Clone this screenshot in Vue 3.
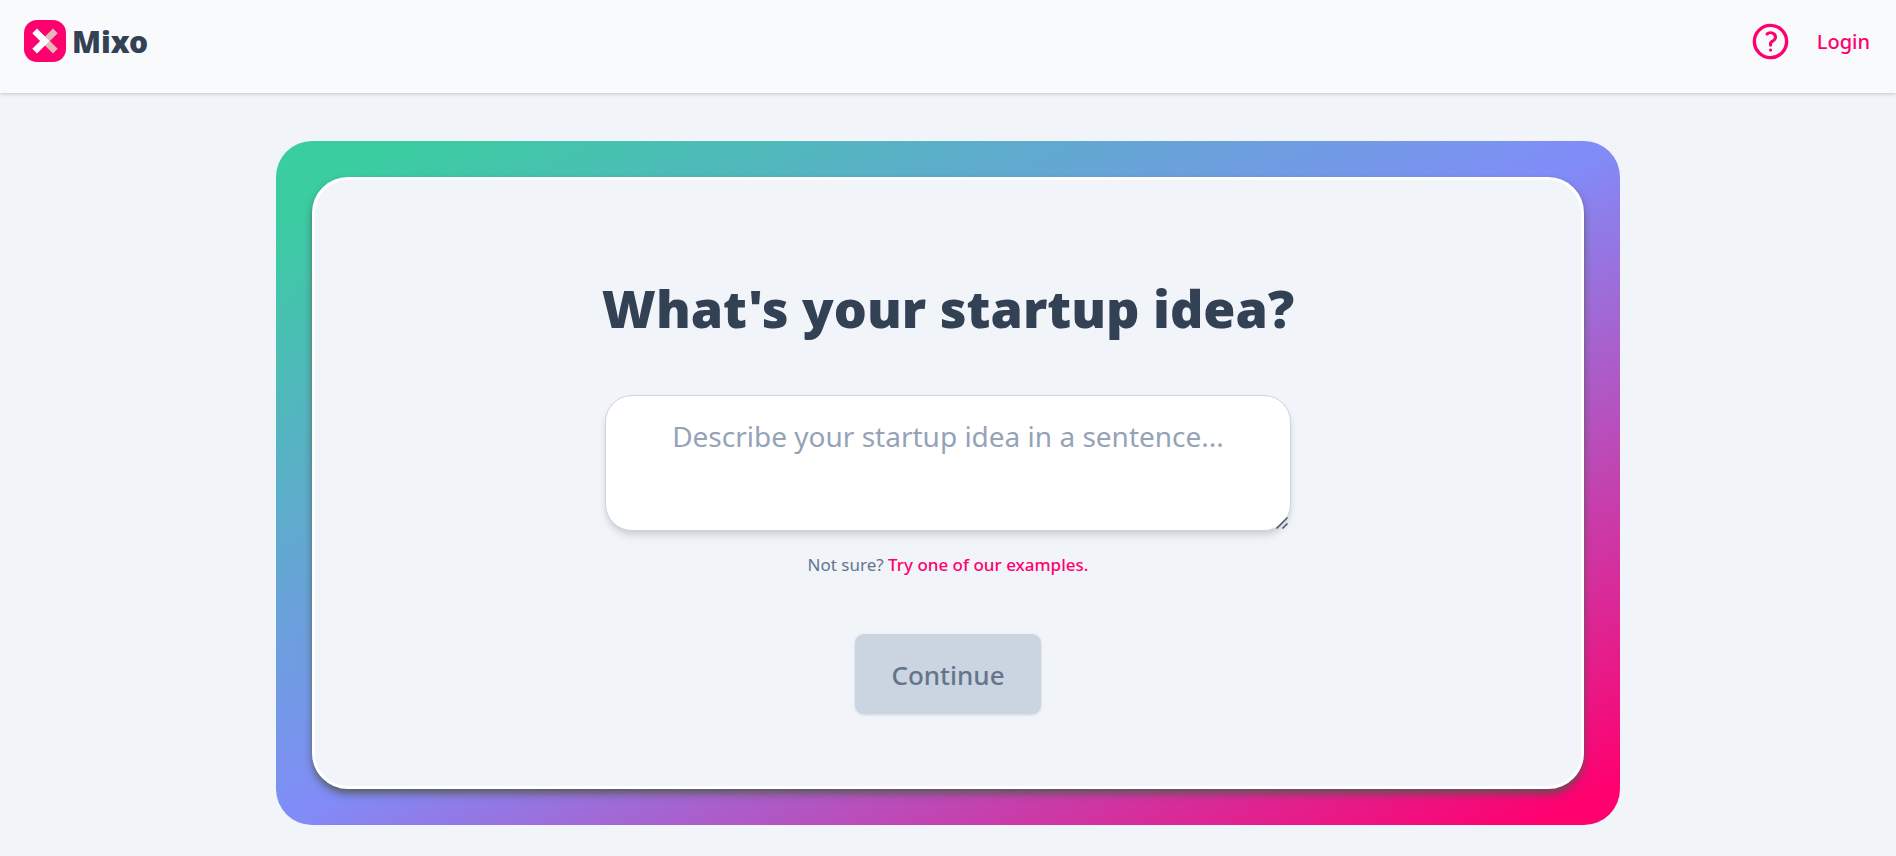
<script setup>
import { ref } from 'vue'

const idea = ref('')
</script>

<template>
  <div class="page">
    <header class="topbar">
      <a class="brand" href="#">
        <svg class="brand-mark" viewBox="0 0 42 42" aria-hidden="true">
          <rect width="42" height="42" rx="13" fill="#ff006e" />
          <path d="M29 8.5 33.7 13.2 25.9 21 33.7 28.8 29 33.5 16.5 21Z" fill="#e2b8b9" />
          <path d="M13 8.5 25.5 21 13 33.5 8.3 28.8 16.1 21 8.3 13.2Z" fill="#fff" />
        </svg>
        <span class="brand-name">Mixo</span>
      </a>
      <nav class="links">
        <a class="help" href="#" aria-label="Help">
          <svg viewBox="0 0 24 24" aria-hidden="true">
            <circle cx="12" cy="12" r="9" />
            <path
              transform="translate(1 0.9) scale(0.92)"
              d="M9.879 7.519c1.171-1.025 3.071-1.025 4.242 0 1.172 1.025 1.172 2.687 0 3.712-.203.179-.43.326-.67.442-.745.361-1.45.999-1.45 1.827v.75M12 17.25h.008v.008H12v-.008Z"
            />
          </svg>
        </a>
        <a class="login" href="#">Login</a>
      </nav>
    </header>

    <main class="frame">
      <form class="card" @submit.prevent>
        <h1><label for="idea">What's your startup idea?</label></h1>
        <div class="field">
          <textarea
            id="idea"
            v-model="idea"
            rows="2"
            placeholder="Describe your startup idea in a sentence..."
          ></textarea>
          <svg class="grip" viewBox="0 0 12 12" aria-hidden="true">
            <path d="M0.5 11.5 11.5 0.5M6.5 11.5 11.5 6.5" />
          </svg>
        </div>
        <p class="hint">Not sure? <a href="#">Try one of our examples.</a></p>
        <button type="submit" :disabled="!idea.trim()">Continue</button>
      </form>
    </main>
  </div>
</template>

<style>
body {
  background: #f1f5f9;
}
</style>

<style scoped>
.page {
  font-family: 'Segoe UI', 'Noto Sans', 'Open Sans', sans-serif;
  color: #334155;
}

a {
  color: #ff006e;
  text-decoration: none;
}

.topbar {
  display: flex;
  align-items: flex-start;
  justify-content: space-between;
  box-sizing: border-box;
  height: 93px;
  padding: 20px 26px 0 24px;
  background: #f8fafc;
  box-shadow: 0 1px 4px rgba(0, 0, 0, 0.12), 0 1px 3px rgba(0, 0, 0, 0.08);
}

.brand {
  display: flex;
  align-items: flex-start;
  gap: 6px;
  color: #334155;
}

.brand-mark {
  width: 42px;
  height: 42px;
}

.brand-name {
  font-size: 30px;
  line-height: 44px;
  font-weight: 900;
}

.links {
  display: flex;
  align-items: flex-start;
  gap: 25px;
}

.help {
  display: flex;
}

.help svg {
  width: 43px;
  height: 43px;
  fill: none;
  stroke: #ff006e;
  stroke-width: 1.9;
  stroke-linecap: round;
  stroke-linejoin: round;
}

.login {
  font-size: 20px;
  line-height: 44px;
  font-weight: 500;
}

.frame {
  box-sizing: border-box;
  max-width: 1344px;
  margin: 48px auto 0;
  padding: 36px;
  border-radius: 36px;
  background: linear-gradient(to bottom right, #3acda0 5%, #818cf8 50%, #ff006e 97%);
}

.card {
  display: flex;
  flex-direction: column;
  align-items: center;
  padding: 92px 36px 72px;
  border: 3px solid #fff;
  border-radius: 36px;
  background: #f1f5f9;
  box-shadow: 0 6px 9px -1px rgba(80, 90, 80, 0.7), 0 3px 6px -2px rgba(80, 90, 80, 0.7);
}

h1 {
  margin: 0;
  font-size: 52px;
  line-height: 72px;
  font-weight: 900;
}

.field {
  position: relative;
  display: flex;
  width: 100%;
  max-width: 686px;
  margin-top: 51px;
}

textarea {
  box-sizing: border-box;
  width: 100%;
  height: 136px;
  margin: 0;
  padding: 18px 36px;
  border: 1px solid #cbd5e1;
  border-radius: 27px;
  background: #fff;
  box-shadow: 0 6px 9px -1px rgba(0, 0, 0, 0.1), 0 3px 6px -2px rgba(0, 0, 0, 0.1);
  color: #334155;
  font-family: inherit;
  font-size: 28px;
  line-height: 45px;
  text-align: center;
  resize: vertical;
}

textarea::placeholder {
  color: #94a3b8;
}

textarea::-webkit-resizer {
  background: transparent;
}

.grip {
  position: absolute;
  right: 3px;
  bottom: 2px;
  width: 12px;
  height: 12px;
  fill: none;
  stroke: #475569;
  stroke-width: 1.5;
  pointer-events: none;
}

.hint {
  margin: 20px 0 0;
  color: #64748b;
  font-size: 17px;
  line-height: 28px;
}

.hint a {
  font-weight: 500;
}

button {
  margin: 55px 0 0;
  padding: 21px 36px 19px;
  border: 0;
  border-radius: 9px;
  background: #cbd5e1;
  box-shadow: 0 1px 3px rgba(0, 0, 0, 0.14);
  color: #64748b;
  font-family: inherit;
  font-size: 26px;
  line-height: 40px;
  font-weight: 500;
}
</style>
